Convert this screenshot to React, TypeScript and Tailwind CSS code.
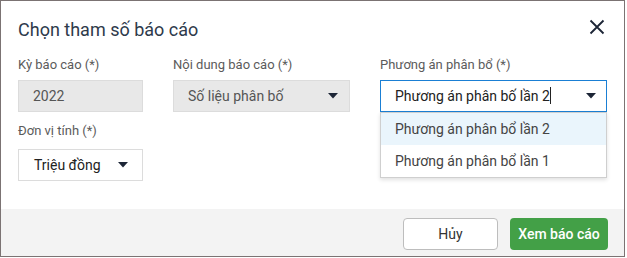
import React from 'react';

const Caret = () => (
  <svg width="10" height="6" viewBox="0 0 10 6" className="shrink-0">
    <path d="M0 0 H10 L5 5.5 Z" fill="#1c2536" />
  </svg>
);

const App: React.FC = () => {
  return (
    <div className="w-[627px] h-[258px] bg-white" style={{ fontFamily: 'Roboto, "Noto Sans", sans-serif' }}>
      <div className="w-[625px] h-[257px] border border-[#7b7373] flex flex-col relative">
        {/* Header */}
        <div className="flex items-center justify-between pl-[17px] pr-[19px] pt-[17px]">
          <h2 className="text-[18px] leading-[24px] text-[#2e3a4b]">Chọn tham số báo cáo</h2>
          <svg width="16" height="16" viewBox="0 0 16 16" className="-mt-[6px]">
            <path d="M1.5 1.5 L14.5 14.5 M14.5 1.5 L1.5 14.5" stroke="#1c2536" strokeWidth="1.8" />
          </svg>
        </div>

        {/* Body */}
        <div className="pl-[17px] pt-[15px] flex gap-[30px]">
          <div className="w-[125px]">
            <div className="text-[13px] leading-[16px] text-[#5b5b5b]">Kỳ báo cáo (*)</div>
            <div className="mt-[7px] h-[32px] border border-[#dcdcdc] bg-[#e8e8e8] flex items-center px-[14px] text-[14px] text-[#555]">
              2022
            </div>
          </div>
          <div className="w-[177px]">
            <div className="text-[13px] leading-[16px] text-[#5b5b5b]">Nội dung báo cáo (*)</div>
            <div className="mt-[7px] h-[32px] border border-[#dcdcdc] bg-[#e8e8e8] flex items-center justify-between pl-[14px] pr-[11px] text-[14px] text-[#555]">
              <span>Số liệu phân bố</span>
              <Caret />
            </div>
          </div>
          <div className="w-[227px] relative">
            <div className="text-[13px] leading-[16px] text-[#5b5b5b]">Phương án phân bổ (*)</div>
            <div className="mt-[7px] h-[32px] border border-[#1a7fd4] bg-white flex items-center justify-between pl-[14px] pr-[10px] text-[14px] text-[#222]">
              <span>
                Phương án phân bố lần 2<span className="inline-block w-px h-[17px] bg-[#222] align-[-3px]" />
              </span>
              <Caret />
            </div>
            <div className="absolute left-0 right-0 top-[55px] bg-white border border-[#cfcfcf] shadow-[0_2px_4px_rgba(0,0,0,0.12)] text-[14px] text-[#444] z-10">
              <div className="h-[32px] flex items-center pl-[14px] bg-[#eaf5fc]">Phương án phân bổ lần 2</div>
              <div className="h-[32px] flex items-center pl-[14px]">Phương án phân bổ lần 1</div>
            </div>
          </div>
        </div>

        <div className="pl-[17px] pt-[11px]">
          <div className="text-[13px] leading-[16px] text-[#5b5b5b]">Đơn vị tính (*)</div>
          <div className="mt-[10px] w-[125px] h-[32px] border border-[#dcdcdc] bg-white flex items-center justify-between pl-[15px] pr-[14px] text-[14px] text-[#222]">
            <span>Triệu đồng</span>
            <Caret />
          </div>
        </div>

        {/* Footer */}
        <div className="mt-auto h-[47px] bg-[#f3f3f3] flex justify-end gap-[12px] pt-[9px] pr-[16px]">
          <button className="w-[95px] h-[32px] bg-white border border-[#bdbdbd] rounded-[4px] text-[14px] text-[#333]">
            Hủy
          </button>
          <button className="w-[98px] h-[32px] bg-[#43a047] rounded-[4px] text-[14px] font-medium text-white">
            Xem báo cáo
          </button>
        </div>
      </div>
    </div>
  );
};

export default App;
